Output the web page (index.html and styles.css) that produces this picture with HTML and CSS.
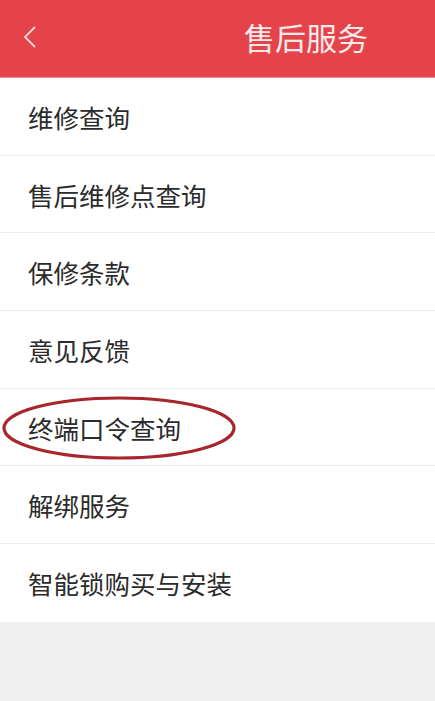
FILE: index.html
```html
<!DOCTYPE html>
<html lang="zh">
<head>
<meta charset="utf-8">
<link rel="stylesheet" href="styles.css">
</head>
<body>
<div class="page">
  <header class="topbar">
    <svg class="back" width="16" height="24" viewBox="0 0 16 24"><path d="M13 2 L3 12 L13 22" fill="none" stroke="#f7d6d6" stroke-width="1.8"/></svg>
    <h1 class="title">售后服务</h1>
  </header>
  <ul class="menu">
    <li class="item">维修查询</li>
    <li class="item">售后维修点查询</li>
    <li class="item">保修条款</li>
    <li class="item">意见反馈</li>
    <li class="item circled">终端口令查询
      <svg class="ring" width="236" height="66" viewBox="0 0 236 66"><ellipse cx="118" cy="33" rx="115" ry="30" fill="none" stroke="#a8262b" stroke-width="3.2"/></svg>
    </li>
    <li class="item">解绑服务</li>
    <li class="item">智能锁购买与安装</li>
  </ul>
  <div class="filler"></div>
</div>
</body>
</html>
```
FILE: styles.css
```css
* { box-sizing: border-box; }
html, body { margin: 0; padding: 0; }
body {
  width: 435px;
  height: 701px;
  overflow: hidden;
  font-family: "Noto Sans CJK SC", "Noto Sans", sans-serif;
  background: #f0f0f0;
}
.page { display: flex; flex-direction: column; height: 701px; }
.topbar {
  height: 78px;
  background: #e4434a;
  display: flex;
  align-items: center;
  padding: 0 67px 0 22px;
  border-bottom: 1px solid #e98d90;
}
.back { flex: none; margin-top: -4px; }
.title {
  margin: -4px 0 0 auto;
  font-size: 31px;
  font-weight: 400;
  color: #fbe9ea;
}
.menu { list-style: none; margin: 0; padding: 0; background: #fff; }
.item {
  height: 77.7px;
  display: flex;
  align-items: center;
  padding-left: 28px;
  font-size: 25.5px;
  color: #2b2b2b;
  border-bottom: 1px solid #ececec;
  position: relative;
}
.item:last-child { border-bottom: none; }
.ring { position: absolute; left: 1px; top: 6px; }
.filler { flex: 1; background: #f0f0f0; }
```
